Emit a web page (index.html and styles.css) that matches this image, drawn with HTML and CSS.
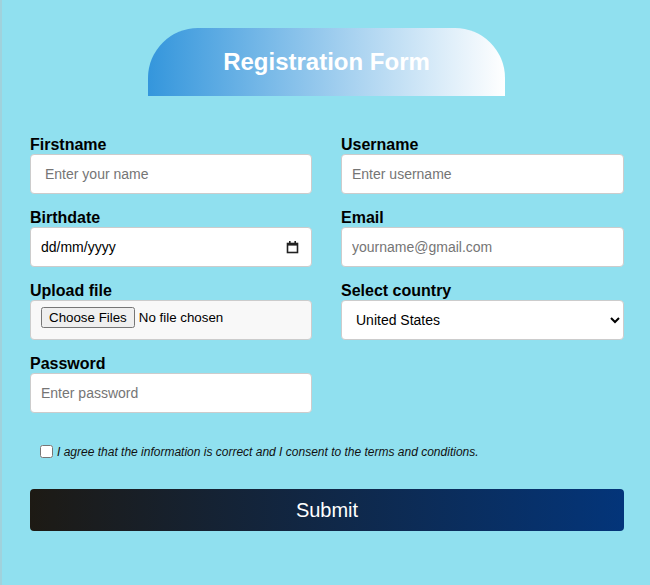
FILE: index.html
```html
<!DOCTYPE html>
<html lang="en">
<head>
<meta charset="utf-8">
<title>Registration Form</title>
<link rel="stylesheet" href="styles.css">
</head>
<body>
<div class="page">
  <div class="header">
    <h1 class="title">Registration Form</h1>
  </div>
  <form class="form">
    <div class="grid">
      <div class="field">
        <label class="label" for="fn">Firstname</label>
        <input class="input input-first" id="fn" type="text" placeholder="Enter your name">
      </div>
      <div class="field">
        <label class="label" for="un">Username</label>
        <input class="input" id="un" type="text" placeholder="Enter username">
      </div>
      <div class="field">
        <label class="label" for="bd">Birthdate</label>
        <div class="date-wrap">
          <input class="input input-date" id="bd" type="text" placeholder="dd/mm/yyyy">
          <svg class="cal-icon" width="13" height="14" viewBox="0 0 13 14" aria-hidden="true">
            <rect x="1.5" y="3.5" width="10" height="9" fill="none" stroke="#222" stroke-width="1.6"/>
            <rect x="1" y="3" width="11" height="2.6" fill="#222"/>
            <rect x="3" y="1" width="1.6" height="2.5" fill="#222"/>
            <rect x="8.4" y="1" width="1.6" height="2.5" fill="#222"/>
          </svg>
        </div>
      </div>
      <div class="field">
        <label class="label" for="em">Email</label>
        <input class="input" id="em" type="email" placeholder="yourname@gmail.com">
      </div>
      <div class="field">
        <label class="label" for="uf">Upload file</label>
        <input class="input input-file" id="uf" type="file" multiple>
      </div>
      <div class="field">
        <label class="label" for="sc">Select country</label>
        <select class="input input-select" id="sc">
          <option>United States</option>
          <option>Canada</option>
          <option>United Kingdom</option>
        </select>
      </div>
      <div class="field">
        <label class="label" for="pw">Password</label>
        <input class="input" id="pw" type="password" placeholder="Enter password">
      </div>
    </div>
    <div class="agree">
      <input class="check" type="checkbox" id="ag">
      <label class="agree-text" for="ag">I agree that the information is correct and I consent to the terms and conditions.</label>
    </div>
    <button class="submit" type="button">Submit</button>
  </form>
</div>
</body>
</html>
```
FILE: styles.css
```css
html, body {
  margin: 0;
  padding: 0;
}
body {
  background: #90e0ef;
  font-family: "Liberation Sans", Arial, sans-serif;
}
.page {
  border-left: 2px solid #a0d2dc;
  min-height: 585px;
  box-sizing: border-box;
  padding: 28px 26px 0 28px;
}
.header {
  width: 357px;
  height: 68px;
  margin-left: 118px;
  border-radius: 50px 50px 0 0;
  background: linear-gradient(to right, #3496dc, #ffffff);
  display: flex;
  align-items: center;
  justify-content: center;
}
.title {
  margin: 0;
  color: #fff;
  font-size: 24px;
  font-weight: bold;
}
.form {
  margin-top: 38px;
}
.grid {
  display: grid;
  grid-template-columns: 282px 1fr;
  column-gap: 29px;
  row-gap: 13px;
}
.field {
  display: flex;
  flex-direction: column;
}
.label {
  font-size: 16px;
  font-weight: bold;
  color: #000;
  line-height: 18px;
  padding-top: 2px;
}
.input {
  box-sizing: border-box;
  height: 40px;
  width: 100%;
  border: 1px solid #ccc;
  border-radius: 4px;
  background: #fff;
  font-family: "Liberation Sans", Arial, sans-serif;
  font-size: 14px;
  padding: 0 10px;
  color: #000;
  margin: 0;
}
.input::placeholder {
  color: #757575;
}
.input-first {
  padding-left: 14px;
}
.date-wrap {
  position: relative;
}
.input-date::placeholder {
  color: #000;
}
.cal-icon {
  position: absolute;
  right: 13px;
  top: 13px;
}
.input-file {
  background: #f8f8f8;
  padding: 6px 10px;
  font-size: 13.33px;
}
.input-file::file-selector-button {
  font-family: "Liberation Sans", Arial, sans-serif;
  font-size: 13.33px;
}
.input-select {
  padding-left: 10px;
}
.agree {
  display: flex;
  align-items: center;
  margin-top: 29px;
  padding-left: 6px;
}
.check {
  margin: 3px 3px 3px 4px;
  width: 13px;
  height: 13px;
}
.agree-text {
  font-size: 12px;
  font-style: italic;
  color: #111;
  margin-left: 1px;
}
.submit {
  display: block;
  width: 100%;
  height: 42px;
  margin-top: 28px;
  border: none;
  border-radius: 4px;
  background: linear-gradient(to right, #1d1a14, #03357a);
  color: #fff;
  font-family: "Liberation Sans", Arial, sans-serif;
  font-size: 20px;
  cursor: pointer;
}
```
